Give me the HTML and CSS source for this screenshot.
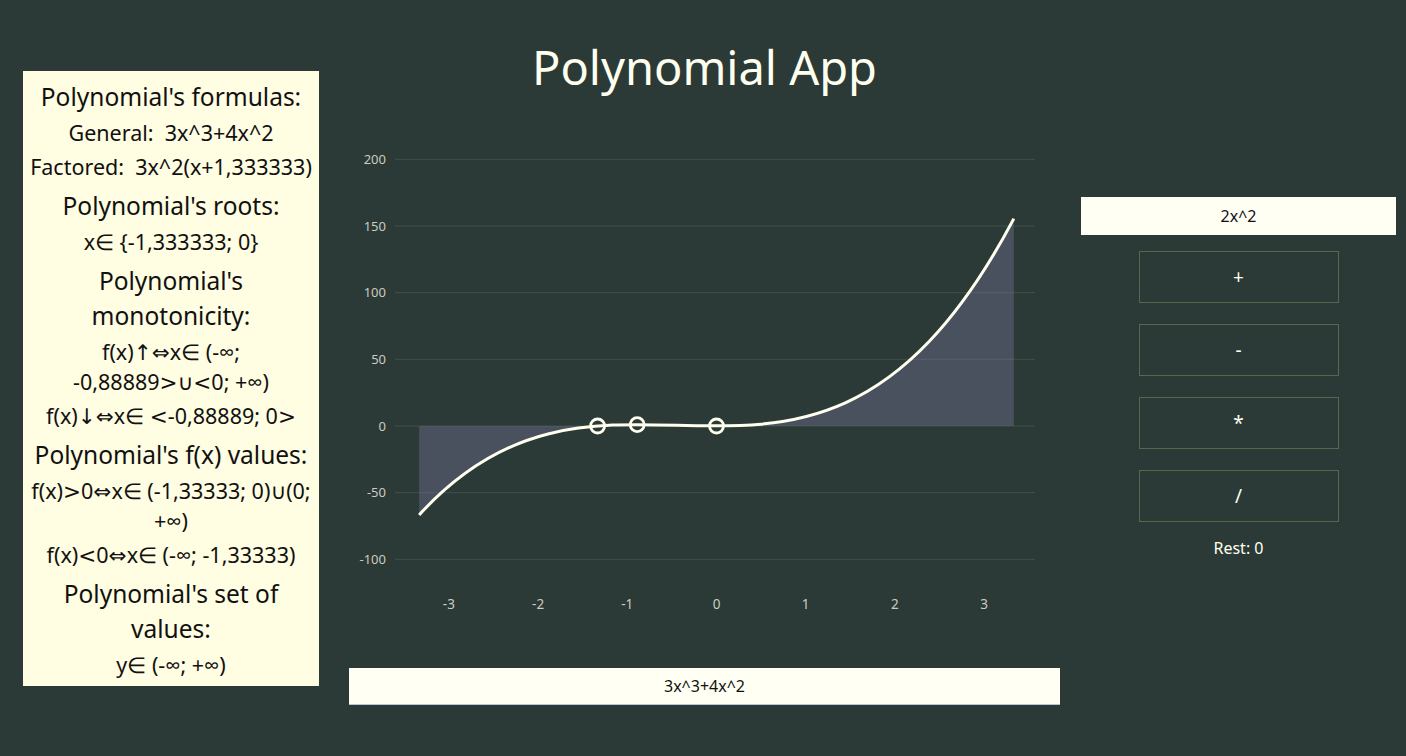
FILE: index.html
```html
<!DOCTYPE html>
<html lang="en">
<head>
<meta charset="utf-8">
<title>Polynomial App</title>
<link rel="stylesheet" href="styles.css">
</head>
<body>
<div class="app">
  <aside class="info">
    <h2 class="info-title">Polynomial's formulas:</h2>
    <p class="info-line">General:&nbsp; 3x^3+4x^2</p>
    <p class="info-line">Factored:&nbsp; 3x^2(x+1,333333)</p>
    <h2 class="info-title">Polynomial's roots:</h2>
    <p class="info-line">x∈ {-1,333333; 0}</p>
    <h2 class="info-title">Polynomial's monotonicity:</h2>
    <p class="info-line">f(x)<span class="sym">↑⇔</span>x∈ (-∞; -0,88889<span class="sym">&gt;∪&lt;</span>0; +∞)</p>
    <p class="info-line">f(x)<span class="sym">↓⇔</span>x∈ <span class="sym">&lt;</span>-0,88889; 0<span class="sym">&gt;</span></p>
    <h2 class="info-title">Polynomial's f(x) values:</h2>
    <p class="info-line">f(x)<span class="sym">&gt;</span>0<span class="sym">⇔</span>x∈ (-1,33333; 0)<span class="sym">∪</span>(0; +∞)</p>
    <p class="info-line">f(x)<span class="sym">&lt;</span>0<span class="sym">⇔</span>x∈ (-∞; -1,33333)</p>
    <h2 class="info-title">Polynomial's set of values:</h2>
    <p class="info-line">y∈ (-∞; +∞)</p>
  </aside>

  <main class="center">
    <h1 class="app-title">Polynomial App</h1>
    <svg class="chart" width="711" height="500" viewBox="0 0 711 500">
      <g class="grid">
        <line x1="46" y1="19.3" x2="686" y2="19.3"/>
        <line x1="46" y1="86" x2="686" y2="86"/>
        <line x1="46" y1="152.7" x2="686" y2="152.7"/>
        <line x1="46" y1="219.3" x2="686" y2="219.3"/>
        <line x1="46" y1="286" x2="686" y2="286"/>
        <line x1="46" y1="352.7" x2="686" y2="352.7"/>
        <line x1="46" y1="419.3" x2="686" y2="419.3"/>
      </g>
      <g class="ylabels">
        <text x="37" y="23.8">200</text>
        <text x="37" y="90.5">150</text>
        <text x="37" y="157.2">100</text>
        <text x="37" y="223.8">50</text>
        <text x="37" y="290.5">0</text>
        <text x="37" y="357.2">-50</text>
        <text x="37" y="423.8">-100</text>
      </g>
      <g class="xlabels">
        <text x="99.9" y="468.5">-3</text>
        <text x="189.1" y="468.5">-2</text>
        <text x="278.3" y="468.5">-1</text>
        <text x="367.5" y="468.5">0</text>
        <text x="456.7" y="468.5">1</text>
        <text x="545.9" y="468.5">2</text>
        <text x="635.1" y="468.5">3</text>
      </g>
      <path class="area" d="M70.17 374.89 C268.39 157.61 466.61 453.9 664.83 78.59 L664.83 286 L70.17 286 Z"/>
      <path class="curve" d="M70.17 374.89 C268.39 157.61 466.61 453.9 664.83 78.59"/>
      <g class="points">
        <circle cx="248.6" cy="286" r="7"/>
        <circle cx="288.2" cy="284.6" r="7"/>
        <circle cx="367.5" cy="286" r="7"/>
      </g>
    </svg>
    <input class="poly-input main-input" type="text" value="3x^3+4x^2">
  </main>

  <section class="ops">
    <input class="poly-input side-input" type="text" value="2x^2">
    <button class="op-btn" type="button">+</button>
    <button class="op-btn" type="button">-</button>
    <button class="op-btn" type="button">*</button>
    <button class="op-btn" type="button">/</button>
    <p class="rest">Rest: 0</p>
  </section>
</div>
</body>
</html>
```

FILE: styles.css
```css
html, body {
  margin: 0;
  padding: 0;
}

body {
  background: #2c3a37;
  font-family: "Noto Sans", "Open Sans", sans-serif;
  color: #fffff0;
  width: 1406px;
  height: 756px;
  overflow: hidden;
}

.app {
  display: flex;
  align-items: flex-start;
  padding-left: 23px;
}

/* left information panel */
.info {
  width: 296px;
  margin-top: 71px;
  padding: 8px 0 6px;
  box-sizing: border-box;
  background: #fffde2;
  color: #111;
  text-align: center;
}

.info-title {
  margin: 6px 0 0;
  font-size: 24.5px;
  font-weight: 400;
  line-height: 35px;
}

.info-title:first-child {
  margin-top: 0;
}

.info-line {
  margin: 4px 0;
  font-size: 21.5px;
  line-height: 30px;
}

.info-line:last-child {
  margin-bottom: 0;
}

.sym {
  font-family: "DejaVu Sans", sans-serif;
  font-size: 1em;
  line-height: 1;
}

/* middle column */
.center {
  width: 711px;
  margin-left: 30px;
  display: flex;
  flex-direction: column;
}

.app-title {
  margin: 38px 0 0;
  height: 58px;
  font-size: 47px;
  font-weight: 400;
  line-height: 58px;
  text-align: center;
  color: #fffff0;
}

.chart {
  display: block;
  margin-top: 44px;
}

.grid line {
  stroke: #414f4a;
  stroke-width: 1;
}

.ylabels text {
  fill: #cbcbc0;
  font-size: 13px;
  text-anchor: end;
}

.xlabels text {
  fill: #cbcbc0;
  font-size: 13.5px;
  text-anchor: middle;
}

.area {
  fill: rgba(150, 140, 200, 0.27);
  stroke: none;
}

.curve {
  fill: none;
  stroke: #fffff0;
  stroke-width: 3;
}

.points circle {
  fill: none;
  stroke: #fffff0;
  stroke-width: 2.8;
}

.poly-input {
  display: block;
  box-sizing: border-box;
  border: none;
  background: #fffff4;
  color: #111;
  font-family: "Noto Sans", "Open Sans", sans-serif;
  font-size: 16px;
  text-align: center;
  padding: 0;
  outline: none;
}

.main-input {
  margin-top: 28px;
  width: 711px;
  height: 37px;
  border-bottom: 1px solid #b9c3d6;
}

/* right column */
.ops {
  width: 315px;
  margin-left: 21px;
  margin-top: 197px;
  display: flex;
  flex-direction: column;
  align-items: center;
}

.side-input {
  width: 315px;
  height: 38px;
}

.op-btn {
  width: 200px;
  height: 52px;
  margin-top: 21px;
  background: transparent;
  border: 1px solid #5c6550;
  color: #fffff0;
  font-family: "Noto Sans", "Open Sans", sans-serif;
  font-size: 19px;
  padding: 0;
  line-height: 1;
}

.op-btn:first-of-type {
  margin-top: 16px;
}

.rest {
  margin: 15px 0 0;
  font-size: 16px;
  line-height: 22px;
  color: #fffff0;
}
```
